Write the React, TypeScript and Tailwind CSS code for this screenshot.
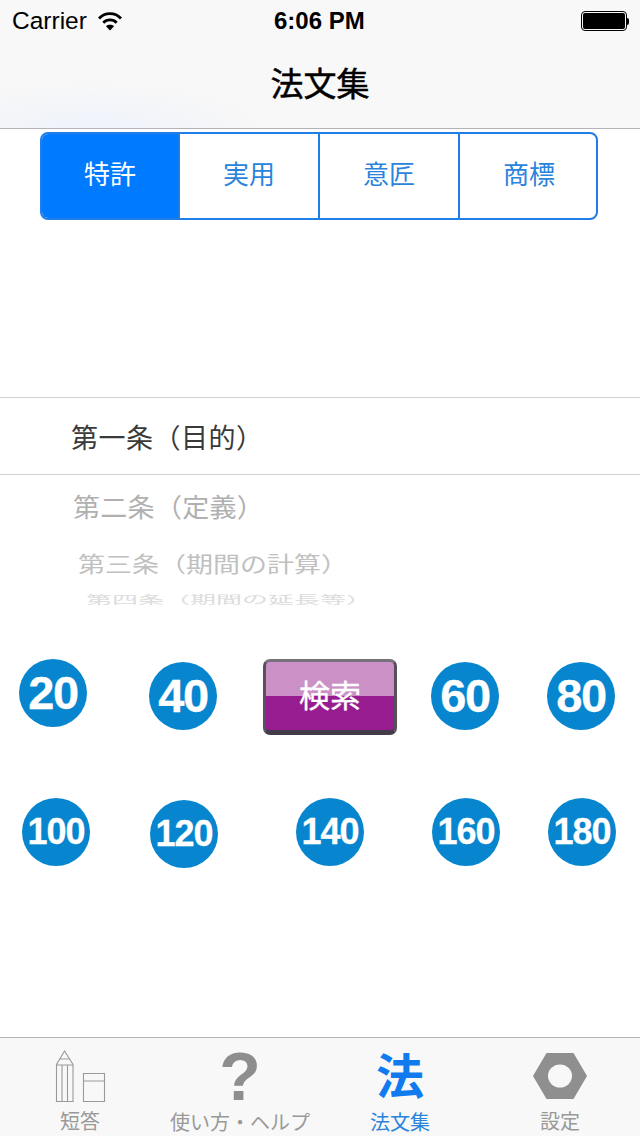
const cjk = "font-['Liberation_Sans','Noto_Sans_CJK_JP',sans-serif]";

function Circle({ label, small, className }: { label: string; small?: boolean; className: string }) {
  return (
    <div className={`w-[68px] h-[68px] rounded-full bg-[#0786cf] flex items-center justify-center shrink-0 text-white font-bold font-['Liberation_Sans',sans-serif] [-webkit-text-stroke:0.3px_white] ${small ? 'text-[36px] tracking-[-1px]' : 'text-[47px] tracking-[-1.5px]'} ${className}`}>
      {label}
    </div>
  );
}

function Segment({ label, active, className }: { label: string; active?: boolean; className: string }) {
  return (
    <div className={`flex items-center justify-center text-[26px] leading-none pb-[2px] ${active ? 'bg-[#007aff] text-white' : 'text-[#2a84dc]'} ${className}`}>
      {label}
    </div>
  );
}

export default function App() {
  return (
    <div className={`w-[640px] h-[1136px] bg-white flex flex-col overflow-hidden ${cjk}`}>
      <header className="h-[129px] shrink-0 flex flex-col border-b border-[#b4b4b6] bg-[#f8f8f8] bg-[radial-gradient(ellipse_170px_45px_at_90px_128px,#eef2fb,#f8f8f8)]">
        <div className="h-[42px] flex items-center justify-between pl-3 pr-[11px] text-black relative">
          <div className="flex items-center gap-[11px]">
            <span className="font-['Liberation_Sans',sans-serif] text-[24.5px] leading-none">Carrier</span>
            <svg width="24" height="20" viewBox="0 0 24 20" fill="none" stroke="#000" strokeWidth="2.8">
              <path d="M1 7.5C7 1 17 1 23 7.5" />
              <path d="M5.3 11.8C9 8 15 8 18.7 11.8" />
              <path d="M12 19.5L8 15.2C10.2 13.4 13.8 13.4 16 15.2Z" fill="#000" stroke="none" />
            </svg>
          </div>
          <span className="absolute left-[274px] font-['Liberation_Sans',sans-serif] font-bold text-[24px] leading-none">6:06 PM</span>
          <div className="flex items-center">
            <div className="w-[46px] h-[20px] rounded-[4px] border border-black p-[1px]">
              <div className="w-full h-full bg-black rounded-[2px]" />
            </div>
            <div className="w-[2px] h-[7px] bg-black rounded-r-[2px]" />
          </div>
        </div>
        <div className="flex-1 flex items-center justify-center text-[33px] font-normal [-webkit-text-stroke:0.5px_black] text-black pb-[1px] leading-none">法文集</div>
      </header>

      <div className="mt-[3px] ml-[40px] w-[558px] h-[88px] shrink-0 rounded-[8px] border-2 border-[#1f7fe6] flex overflow-hidden">
        <Segment label="特許" active className="w-[136px]" />
        <Segment label="実用" className="w-[140px] border-l-2 border-[#1f7fe6]" />
        <Segment label="意匠" className="w-[140px] border-l-2 border-[#1f7fe6]" />
        <Segment label="商標" className="flex-1 border-l-2 border-[#1f7fe6] pl-[2px]" />
      </div>

      <div className="mt-[177px] h-[78px] shrink-0 border-y border-[#cfcfcf] flex items-center pl-[71px] pt-[6px] text-[27px] tracking-[0.5px] text-[#3a3a3a] leading-none">
        第一条（目的）
      </div>
      <div className="h-[132px] shrink-0 overflow-hidden flex flex-col">
        <div className="pl-[73px] pt-[22px] text-[27px] tracking-[0.3px] leading-none text-[#b0b0b0] scale-y-[0.96] origin-top">第二条（定義）</div>
        <div className="pl-[78px] mt-[31px] text-[27px] leading-none text-[#c0c0c0] scale-y-[0.78] origin-top">第三条（期間の計算）</div>
        <div className="pl-[86px] mt-[13px] text-[26px] leading-none text-[#dcdcdc] scale-y-[0.42] origin-top">第四条（期間の延長等）</div>
      </div>

      <div className="flex items-start h-[76px] shrink-0 mt-[52px]">
        <Circle label="20" className="ml-[19px]" />
        <Circle label="40" className="ml-[62px] mt-[3px]" />
        <div className="ml-[46px] w-[134px] h-[76px] rounded-[7px] border-[3px] border-t-[#77727a] border-x-[#55505a] border-b-[#423c48] border-b-[5px] overflow-hidden shrink-0 bg-[linear-gradient(#cb90c6_0_50%,#971c8f_50%_100%)] flex items-center justify-center">
          <span className="text-white text-[31px] font-normal [-webkit-text-stroke:0.4px_white] leading-none">検索</span>
        </div>
        <Circle label="60" className="ml-[34px] mt-[3px]" />
        <Circle label="80" className="ml-[48px] mt-[3px]" />
      </div>

      <div className="flex items-start h-[70px] shrink-0 mt-[63px]">
        <Circle label="100" small className="ml-[22px]" />
        <Circle label="120" small className="ml-[60px] mt-[2px]" />
        <Circle label="140" small className="ml-[78px]" />
        <Circle label="160" small className="ml-[68px]" />
        <Circle label="180" small className="ml-[48px]" />
      </div>

      <div className="flex-1" />

      <nav className="h-[99px] shrink-0 border-t border-[#b4b4b6] bg-[#f8f8f8] grid grid-cols-4">
        <div className="flex flex-col items-center">
          <svg width="52" height="54" viewBox="0 0 52 54" fill="none" stroke="#9a9a9a" strokeWidth="1.1" className="mt-[12px] ml-[2px]">
            <path d="M1.5 51.5V14.5L9.5 1L18 14.5V51.5Z" />
            <path d="M1.5 15H18M7 15V51.5M12.5 15V51.5M5 9H14" />
            <path d="M28.5 23.5H49.5V51.5H28.5ZM28.5 31H49.5" />
          </svg>
          <span className="text-[20px] text-[#999] leading-none mt-[8px]">短答</span>
        </div>
        <div className="flex flex-col items-center">
          <span className="font-['Liberation_Sans',sans-serif] font-bold text-[68px] text-[#8e8e8e] leading-none h-[68px] mt-[4px]">?</span>
          <span className="text-[20px] text-[#999] leading-none mt-[3px] whitespace-nowrap">使い方・ヘルプ</span>
        </div>
        <div className="flex flex-col items-center">
          <span className="text-[48px] font-bold text-[#0f7bef] leading-none h-[64px] mt-[8px] flex items-center">法</span>
          <span className="text-[20px] text-[#2a84dc] leading-none mt-[3px]">法文集</span>
        </div>
        <div className="flex flex-col items-center">
          <svg width="54" height="48" viewBox="0 0 54 48" className="mt-[14px]">
            <path fillRule="evenodd" d="M13.5 1H40.5L54 24L40.5 47H13.5L0 24ZM27 12.5A12 11.5 0 1 0 27 35.5A12 11.5 0 1 0 27 12.5Z" fill="#8f8f8f" />
          </svg>
          <span className="text-[20px] text-[#999] leading-none mt-[12px]">設定</span>
        </div>
      </nav>
    </div>
  );
}
